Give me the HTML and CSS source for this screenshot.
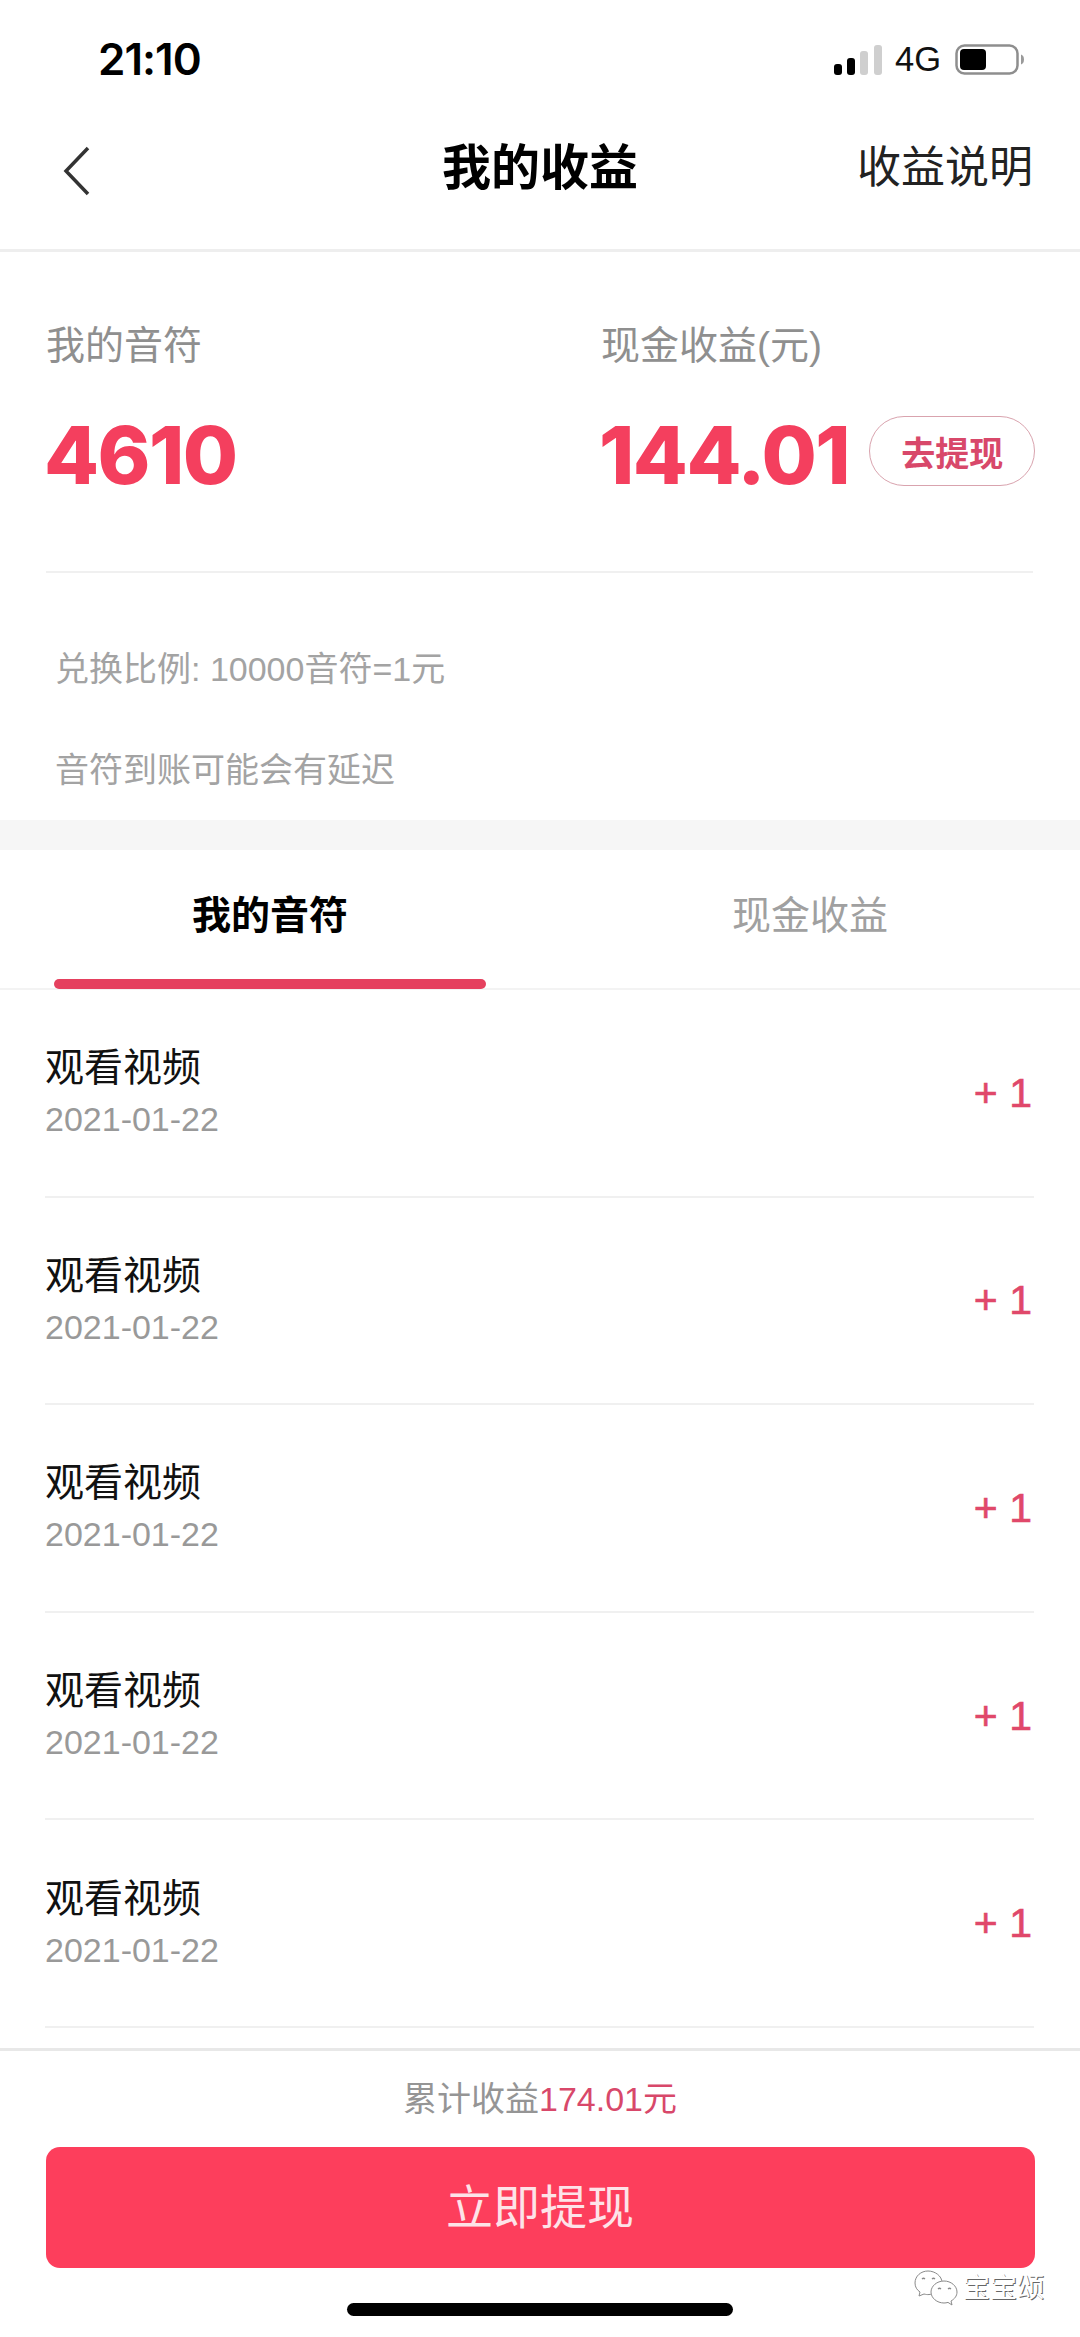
FILE: index.html
```html
<!DOCTYPE html>
<html lang="zh-CN">
<head>
<meta charset="utf-8">
<title>我的收益</title>
<link rel="stylesheet" href="styles.css">
</head>
<body>
<div class="page">
  <div class="status">
    <span class="time">21:10</span>
    <div class="status-right">
      <svg class="signal" width="48" height="30" viewBox="0 0 48 30"><rect x="0" y="19" width="8" height="11" rx="3" fill="#000"/><rect x="13" y="13" width="8" height="17" rx="3" fill="#000"/><rect x="26" y="6" width="8" height="24" rx="3" fill="#cfcfcf"/><rect x="40" y="0" width="8" height="30" rx="3" fill="#cfcfcf"/></svg>
      <span class="net">4G</span>
      <svg class="battery" width="70" height="31" viewBox="0 0 70 31"><rect x="1.500" y="1.500" width="61" height="28" rx="8" fill="none" stroke="#8e8e8e" stroke-width="2.500"/><rect x="5" y="5" width="26" height="21" rx="4" fill="#000"/><path d="M66 10.500c2 .6 3 2.600 3 5s-1 4.400-3 5z" fill="#9a9a9a"/></svg>
    </div>
  </div>
  <header class="nav">
    <svg class="back" width="28" height="50" viewBox="0 0 28 50"><path d="M25 2 3 25l22 23" fill="none" stroke="#333" stroke-width="3.500"/></svg>
    <h1 class="title">我的收益</h1>
    <span class="explain">收益说明</span>
  </header>
  <section class="summary">
    <div class="stats">
      <div class="stat stat-notes">
        <div class="stat-label">我的音符</div>
        <div class="stat-value">4610</div>
      </div>
      <div class="stat stat-cash">
        <div class="stat-label">现金收益(元)</div>
        <div class="stat-row">
          <div class="stat-value">144.01</div>
          <span class="pill">去提现</span>
        </div>
      </div>
    </div>
    <div class="notes">
      <p class="note">兑换比例: 10000音符=1元</p>
      <p class="note">音符到账可能会有延迟</p>
    </div>
  </section>
  <div class="band"></div>
  <nav class="tabs">
    <div class="tab tab-active">我的音符<i class="tab-bar"></i></div>
    <div class="tab">现金收益</div>
  </nav>
  <ul class="list">
    <li class="row"><div class="row-text"><div class="row-title">观看视频</div><div class="row-date">2021-01-22</div></div><span class="row-num">+ 1</span></li>
    <li class="row"><div class="row-text"><div class="row-title">观看视频</div><div class="row-date">2021-01-22</div></div><span class="row-num">+ 1</span></li>
    <li class="row"><div class="row-text"><div class="row-title">观看视频</div><div class="row-date">2021-01-22</div></div><span class="row-num">+ 1</span></li>
    <li class="row"><div class="row-text"><div class="row-title">观看视频</div><div class="row-date">2021-01-22</div></div><span class="row-num">+ 1</span></li>
    <li class="row"><div class="row-text"><div class="row-title">观看视频</div><div class="row-date">2021-01-22</div></div><span class="row-num">+ 1</span></li>
  </ul>
  <footer class="footer">
    <div class="total">累计收益<span class="total-num">174.01元</span></div>
    <button class="cta">立即提现</button>
    <div class="home"></div>
  </footer>
  <div class="mark">
    <svg width="44" height="36" viewBox="0 0 44 36"><g fill="#fff" stroke="#8a8a8a" stroke-width="1"><path d="M14 1C7 1 1 6 1 13c0 4 2 7 5 9l-1 4 5-2c2 .5 3 .6 4 .6 7 0 14-5 14-12C28 6 21 1 14 1z"/><path d="M30 11c-7 0-13 5-13 11s6 11 13 11c1.500 0 2.500-.2 4-.6l4 2.600-1-4c3.500-2 6-5 6-9 0-6-6-11-13-11z"/></g><g fill="none" stroke="#8a8a8a" stroke-width="1.200"><path d="M8 9c1-1 2-1 3 0M18 9c1-1 2-1 3 0M24 19c1-1 2-1 3 0M34 19c1-1 2-1 3 0"/></g></svg>
    <span class="mark-text">宝宝颂</span>
  </div>
</div>
</body>
</html>
```
FILE: styles.css
```css
* { box-sizing: border-box; }
html, body { margin: 0; padding: 0; background: #fff; }
body { font-family: "Liberation Sans", "Noto Sans CJK SC", sans-serif; }
.page { position: relative; width: 1080px; height: 2337px; overflow: hidden; display: flex; flex-direction: column; background: #fff; }

.status { height: 86px; flex: none; display: flex; justify-content: space-between; align-items: flex-end; padding: 0 55px 11px 98px; }
.time { font-family: Inter, sans-serif; font-size: 44px; line-height: 32px; font-weight: 600; color: #000; letter-spacing: -1px; }
.status-right { display: flex; align-items: flex-end; }
.signal { display: block; margin-right: 13px; }
.net { font-size: 34.500px; line-height: 32px; color: #111; margin-right: 14px; }
.battery { display: block; }

.nav { height: 166px; flex: none; display: flex; align-items: center; padding: 0 47px 0 63px; border-bottom: 3px solid #eeeeee; position: relative; }
.back { display: block; margin-top: 6px; }
.title { position: absolute; left: 0; right: 0; margin: 0; text-align: center; font-size: 49px; line-height: 60px; font-weight: 700; color: #000; }
.explain { margin-left: auto; font-size: 44px; line-height: 56px; color: #222; }

.summary { height: 568px; flex: none; padding: 0 47px 0 46px; display: flex; flex-direction: column; }
.stats { height: 321px; flex: none; display: flex; border-bottom: 2px solid #f0f0f0; padding-top: 69px; }
.stat-notes { width: 555px; flex: none; }
.stat-cash { flex: 1; }
.stat-label { font-size: 39px; line-height: 50px; color: #8f8f8f; }
.stat-row { display: flex; align-items: center; }
.stat-value { font-family: Inter, sans-serif; font-size: 80px; line-height: 96px; font-weight: 800; color: #f43f5e; margin-top: 36px; margin-left: -2px; letter-spacing: -1.500px; }
.pill { width: 166px; height: 70px; margin-left: 20px; margin-top: 28px; border: 1.500px solid #d9a3ae; border-radius: 35px; display: flex; align-items: center; justify-content: center; font-size: 34px; font-weight: 700; color: #d8486a; }
.notes { padding: 79px 0 0 9px; }
.note { margin: 0 0 67px; font-size: 34px; line-height: 34px; color: #a3a3a3; }

.band { height: 30px; flex: none; background: #f6f6f6; }

.tabs { height: 140px; flex: none; display: flex; border-bottom: 2px solid #f3f3f3; }
.tab { position: relative; width: 540px; flex: none; text-align: center; padding-top: 41px; font-size: 39px; line-height: 50px; color: #a0a0a0; }
.tab-active { font-weight: 700; color: #000; }
.tab-bar { position: absolute; left: 54px; bottom: -1px; width: 432px; height: 10px; border-radius: 5px; background: #e5405e; }

.list { list-style: none; margin: 0; padding: 0 46px 0 45px; flex: 1; }
.row { height: 207.600px; display: flex; align-items: center; justify-content: space-between; border-bottom: 2px solid #f0f0f0; }
.row-text { padding-bottom: 3px; }
.row-title { font-size: 39px; line-height: 50px; color: #111; }
.row-date { font-size: 34px; line-height: 40px; color: #999; margin-top: 6px; }
.row-num { font-size: 41px; line-height: 50px; color: #e0486a; margin-right: 2px; -webkit-text-stroke: 0.6px #e0486a; }

.footer { height: 289px; flex: none; border-top: 3px solid #e8e8e8; padding: 0 45px; display: flex; flex-direction: column; align-items: center; }
.total { margin-top: 27px; font-size: 34px; line-height: 42px; color: #959595; }
.total-num { color: #d8486a; }
.cta { margin-top: 27px; width: 989px; height: 121px; flex: none; border: 0; border-radius: 14px; background: #fd3e5c; color: #fde3e8; font: 47px/60px "Liberation Sans", "Noto Sans CJK SC", sans-serif; }
.home { margin-top: 35px; width: 386px; height: 13px; border-radius: 7px; background: #000; }

.mark { position: absolute; left: 914px; top: 2270px; display: flex; align-items: center; gap: 5px; }
.mark svg { display: block; }
.mark-text { font-size: 27px; line-height: 34px; color: #fff; text-shadow: 1px 1px 0 #666; }
```
